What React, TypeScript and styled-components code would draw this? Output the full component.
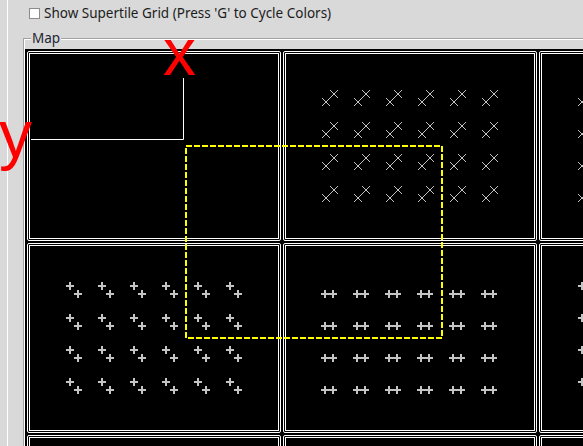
import React from "react";
import styled, { createGlobalStyle } from "styled-components";

const GlobalStyle = createGlobalStyle`
  html, body { margin: 0; padding: 0; background: #d9d9d9; overflow: hidden; }
  body { font-family: "Noto Sans", "DejaVu Sans", sans-serif; }
`;

const Page = styled.div`
  position: relative;
  width: 583px;
  height: 446px;
  overflow: hidden;
  background: #d9d9d9;
  padding-left: 7px;
  box-sizing: border-box;
`;

const Panel = styled.div`
  height: 100%;
  border-left: 1px solid #ffffff;
  display: flex;
  flex-direction: column;
`;

const TopRow = styled.label`
  display: flex;
  align-items: center;
  height: 26px;
  padding-left: 21px;
  font-size: 13.5px;
  color: #1c1c1c;
`;

const CheckBox = styled.span`
  width: 11px;
  height: 11px;
  box-sizing: border-box;
  border: 1px solid #8c8c8c;
  background: #ffffff;
  margin-right: 4px;
`;

const GroupBox = styled.div`
  position: relative;
  margin-left: 15px;
  margin-top: 12px;
  flex: 1;
  border-top: 1px solid #a2a2a2;
  border-left: 1px solid #a2a2a2;
  box-shadow: inset 1px 1px 0 #ffffff;
  padding: 10px 0 0 1px;
  display: flex;
  flex-direction: column;
  min-height: 0;
`;

const GroupTitle = styled.span`
  position: absolute;
  top: -8px;
  left: 7px;
  padding: 0 1px;
  background: #d9d9d9;
  font-size: 13.5px;
  line-height: 14px;
  color: #1f2533;
`;

const Canvas = styled.div`
  flex: 1;
  background: #000;
  padding: 1px 0 0 1px;
  display: grid;
  grid-template-columns: repeat(3, 256px);
  grid-auto-rows: 192px;
  overflow: hidden;
`;

const Cell = styled.div`
  position: relative;
  background: #000;
  &::before {
    content: "";
    position: absolute;
    inset: 1px;
    border: 1px solid #fff;
    border-radius: 2px;
  }
  &::after {
    content: "";
    position: absolute;
    inset: 3px;
    border: 1px solid #fff;
  }
`;

const GlyphLayer = styled.svg`
  position: absolute;
  inset: 0;
  width: 256px;
  height: 192px;
  z-index: 1;
`;

const Overlay = styled.svg`
  position: absolute;
  left: 0;
  top: 0;
  width: 583px;
  height: 446px;
  pointer-events: none;
  z-index: 2;
`;

const AxisLabel = styled.span<{ $x: number; $y: number }>`
  position: absolute;
  left: ${(p) => p.$x}px;
  top: ${(p) => p.$y}px;
  font-family: "Liberation Sans", Arial, sans-serif;
  font-size: 66px;
  line-height: 1;
  color: #ff0000;
  z-index: 3;
`;

type Pattern = "none" | "x" | "plus" | "pair";

const GLYPH = "#c4c4c4";

function Cross({ cx, cy }: { cx: number; cy: number }) {
  return (
    <g>
      <rect x={cx - 4} y={cy - 1} width={8} height={2} fill={GLYPH} />
      <rect x={cx - 1} y={cy - 4} width={2} height={8} fill={GLYPH} />
    </g>
  );
}

function SmallX({ cx, cy }: { cx: number; cy: number }) {
  return (
    <g stroke={GLYPH} strokeWidth={1} shapeRendering="crispEdges">
      <line x1={cx - 4} y1={cy - 4} x2={cx + 4} y2={cy + 4} />
      <line x1={cx - 4} y1={cy + 4} x2={cx + 4} y2={cy - 4} />
    </g>
  );
}

function Glyphs({ pattern }: { pattern: Pattern }) {
  if (pattern === "none") return null;
  const items: React.ReactNode[] = [];
  for (let j = 0; j < 4; j++) {
    for (let i = 0; i < 6; i++) {
      const ox = 32 + 32 * i;
      const oy = 32 + 32 * j;
      const key = `${i}-${j}`;
      if (pattern === "x") {
        items.push(
          <g key={key}>
            <SmallX cx={ox + 12} cy={oy + 20} />
            <SmallX cx={ox + 20} cy={oy + 12} />
          </g>
        );
      } else if (pattern === "plus") {
        items.push(
          <g key={key}>
            <Cross cx={ox + 12} cy={oy + 12} />
            <Cross cx={ox + 20} cy={oy + 20} />
          </g>
        );
      } else {
        items.push(
          <g key={key}>
            <Cross cx={ox + 11} cy={oy + 20} />
            <Cross cx={ox + 19} cy={oy + 20} />
          </g>
        );
      }
    }
  }
  return <GlyphLayer viewBox="0 0 256 192">{items}</GlyphLayer>;
}

const map: Pattern[] = ["none", "x", "x", "plus", "pair", "plus", "none", "none", "none"];

export default function App() {
  return (
    <>
      <GlobalStyle />
      <Page>
        <Panel>
          <TopRow>
            <CheckBox />
            Show Supertile Grid (Press 'G' to Cycle Colors)
          </TopRow>
          <GroupBox>
            <GroupTitle>Map</GroupTitle>
            <Canvas>
              {map.map((p, idx) => (
                <Cell key={idx}>
                  <Glyphs pattern={p} />
                </Cell>
              ))}
            </Canvas>
          </GroupBox>
        </Panel>
        <Overlay viewBox="0 0 583 446">
          <polyline points="31,139.5 183.5,139.5 183.5,78" fill="none" stroke="#fff" strokeWidth={1} />
          <rect x={186} y={146} width={256} height={192} fill="none" stroke="#ffff00" strokeWidth={2} strokeDasharray="6 2" shapeRendering="crispEdges" />
        </Overlay>
        <AxisLabel $x={163} $y={19}>x</AxisLabel>
        <AxisLabel $x={-1} $y={101}>y</AxisLabel>
      </Page>
    </>
  );
}
